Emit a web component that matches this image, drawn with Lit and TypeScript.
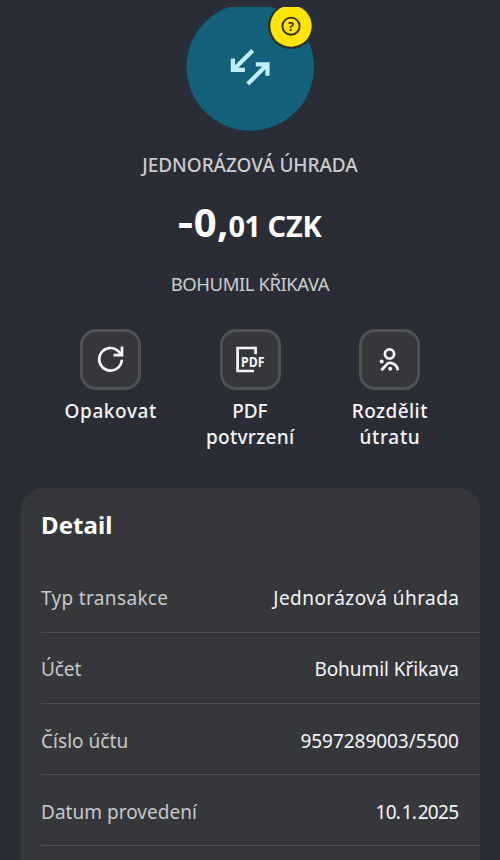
import { LitElement, html, css, svg } from "lit";
import { customElement } from "lit/decorators.js";

const icons = {
  repeat: svg`<path d="M41.8 30.8A11.3 11.3 0 1 1 38.6 22.4L41.4 25.6" /><path d="M42 17.6V26.2H33.6" />`,
  pdf: svg`<path d="M35.6 25.2V19H17.6V42H34" />
    <text x="21" y="38.1" textLength="23.4" lengthAdjust="spacingAndGlyphs">PDF</text>`,
  split: svg`<circle cx="30.5" cy="25" r="4.6" />
    <path d="M22.3 41.2L28.4 34.8Q29.7 33.5 31.6 33.8C36.2 34.5 38.3 37.4 38.9 41.2" />
    <g class="dots"><circle cx="22.7" cy="32.4" r="2" /><circle cx="31.2" cy="39.7" r="2" /></g>`,
};

@customElement("app-root")
export class AppRoot extends LitElement {
  static styles = css`
    :host {
      display: flex;
      flex-direction: column;
      box-sizing: border-box;
      width: 500px;
      height: 860px;
      padding-top: 7px;
      overflow: hidden;
      background: #2a2d35;
      color: #f4f5f8;
      font: 400 19px/26px "Noto Sans", sans-serif;
    }
    .hero {
      height: 145px;
      flex: none;
      overflow: hidden;
      display: flex;
      justify-content: center;
    }
    .hero svg { display: block; flex: none; }
    .kind, .party { text-align: center; color: #cbccd0; height: 26px; flex: none; white-space: nowrap; }
    .kind { font-weight: 500; letter-spacing: -0.06px; }
    .amount {
      display: flex;
      justify-content: center;
      align-items: baseline;
      height: 54px;
      margin-top: 17px;
      font-size: 40px;
      line-height: 54px;
      font-weight: 700;
      color: #fff;
      white-space: nowrap;
    }
    .sign { transform: translateX(1px) scaleX(1.2) translateY(-1px); }
    .whole { margin-left: 2.5px; }
    .comma { margin-left: 0.5px; }
    .small { font-size: 29px; letter-spacing: -0.8px; }
    .cur { margin-left: 7.5px; letter-spacing: -0.2px; }
    .party { margin-top: 22px; font-size: 18.5px; letter-spacing: -0.45px; }
    .actions {
      display: grid;
      grid-template-columns: repeat(3, 139.6px);
      justify-content: center;
      margin-top: 32px;
      height: 159px;
      flex: none;
    }
    .action { display: flex; flex-direction: column; align-items: center; font-weight: 500; text-align: center; }
    .tile {
      box-sizing: border-box;
      width: 61px;
      height: 61px;
      margin-bottom: 8px;
      border: 3px solid #515257;
      border-radius: 16px;
      background: #36373b;
    }
    .tile svg { display: block; margin: -3px; fill: none; stroke: #f6f7fa; stroke-width: 2.7; }
    .tile text { font: 700 14px "Noto Sans", sans-serif; fill: #f6f7fa; stroke: none; }
    .dots { fill: #f6f7fa; stroke: none; }
    .line { height: 26px; white-space: nowrap; }
    .card {
      flex: 1;
      margin: 0 20px 0 21px;
      border-radius: 22px 22px 0 0;
      background: #36373b;
      padding-left: 20px;
    }
    h2 { margin: 0; padding-top: 20px; height: 53.6px; font-size: 24px; line-height: 34px; letter-spacing: 0.1px; color: #fff; }
    .row {
      box-sizing: border-box;
      height: 71.2px;
      padding: 3px 21px 0 0;
      display: flex;
      justify-content: space-between;
      align-items: center;
      border-bottom: 1px solid #4e4f54;
    }
    .label { color: #c6c7ca; }
  `;

  private text(value: string, spacing: number, word = 0, cls = "") {
    return html`<span class=${cls} style="letter-spacing:${spacing}px;word-spacing:${word}px;margin-right:${-spacing}px">${value}</span>`;
  }

  private action(icon: unknown, lines: [string, number][]) {
    return html`<div class="action">
      <div class="tile"><svg width="61" height="61" viewBox="0 0 61 61">${icon}</svg></div>
      ${lines.map(([t, s]) => html`<div class="line">${this.text(t, s)}</div>`)}
    </div>`;
  }

  private row(label: string, ls: number, value: string, vs: number, word = 0) {
    return html`<div class="row">${this.text(label, ls, 0, "label")}${this.text(value, vs, word)}</div>`;
  }

  render() {
    return html`
      <div class="hero">
        <svg width="140" height="124" viewBox="180 7 140 124">
          <circle cx="250.3" cy="67" r="63.7" fill="#13607b" />
          <circle cx="291" cy="26" r="23" fill="#2a2d35" />
          <circle cx="291" cy="26" r="20.7" fill="#ffe500" />
          <circle cx="291" cy="26.2" r="8.6" fill="none" stroke="#33311c" stroke-width="1.9" />
          <text x="291" y="30.8" text-anchor="middle" font-family="Noto Sans, sans-serif" font-weight="700" font-size="12.5" fill="#33311c">?</text>
          <g fill="none" stroke="#c0eeff" stroke-width="4.2">
            <path d="M252.7 50.4L233.6 69.5M232.9 58.6V69.8H244.9" />
            <path d="M247.8 84L267 64.8M255.8 64.3H267.5V75.8" />
          </g>
        </svg>
      </div>
      <div class="kind">JEDNORÁZOVÁ ÚHRADA</div>
      <div class="amount">
        <span class="sign">-</span><span class="whole">0</span><span class="comma">,</span><span class="small">01</span><span class="small cur">CZK</span>
      </div>
      <div class="party">BOHUMIL KŘIKAVA</div>
      <div class="actions">
        ${this.action(icons.repeat, [["Opakovat", 0.6]])}
        ${this.action(icons.pdf, [["PDF", -0.1], ["potvrzení", 0.3]])}
        ${this.action(icons.split, [["Rozdělit", 0.42], ["útratu", 0.7]])}
      </div>
      <div class="card">
        <h2>Detail</h2>
        ${this.row("Typ transakce", 0.34, "Jednorázová úhrada", 0.44)}
        ${this.row("Účet", -0.1, "Bohumil Křikava", -0.06)}
        ${this.row("Číslo účtu", 0.04, "9597289003/5500", -0.05)}
        ${this.row("Datum provedení", 0.03, "10. 1. 2025", -0.7, -2.8)}
      </div>
    `;
  }
}
